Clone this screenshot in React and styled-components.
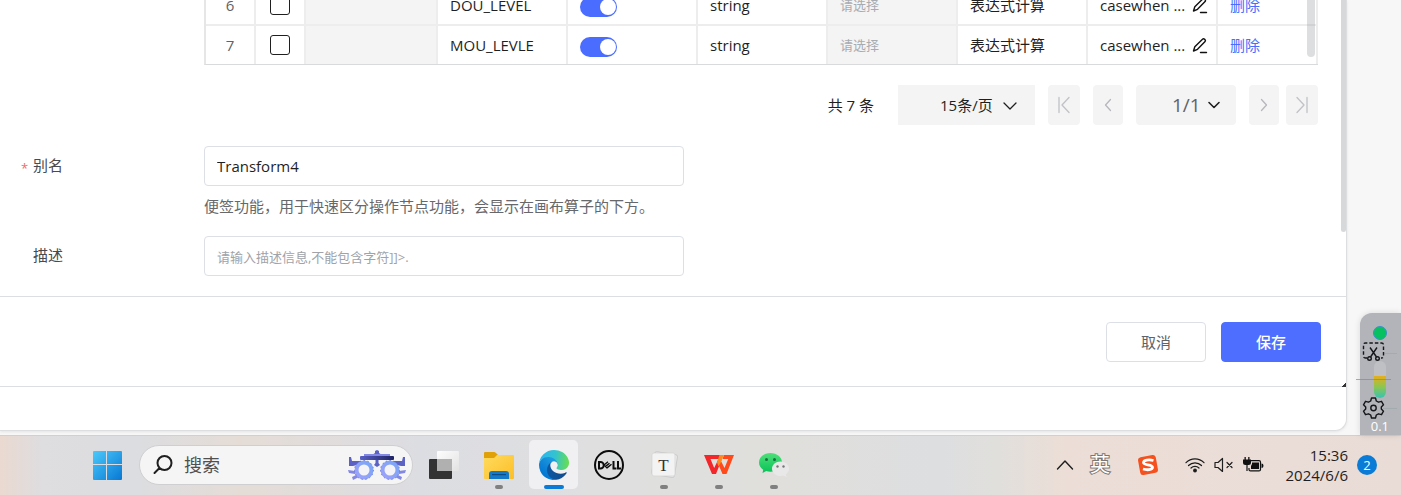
import React from "react";
import styled, { createGlobalStyle } from "styled-components";

const Global = createGlobalStyle`
  *, *::before, *::after { box-sizing: border-box; }
  body {
    margin: 0;
    background: #f7f7f7;
    color: #1f1f1f;
    font: 15px/20px "Open Sans", "Noto Sans CJK SC", sans-serif;
  }
  button, input, select { font: inherit; color: inherit; }
  button { cursor: pointer; }
`;

const Screen = styled.div`
  min-height: 100vh;
  display: flex;
  flex-direction: column;
  overflow: hidden;
`;
const Workspace = styled.div`
  flex: 1;
  display: flex;
  padding-bottom: 4px;
`;
const Panel = styled.main`
  flex: 1;
  min-width: 0;
  background: #fff;
  border-right: 1px solid #dcdee0;
  border-bottom: 1px solid #dcdee0;
  border-bottom-right-radius: 12px;
  box-shadow: 0 1px 3px rgba(0, 0, 0, 0.08);
`;
const Content = styled.div`
  position: relative;
  padding-right: 28px;
  padding-bottom: 20px;
`;
const ScrollThumb = styled.div`
  position: absolute;
  top: 0;
  right: ${(p) => p.$right}px;
  width: ${(p) => p.$width}px;
  height: ${(p) => p.$length}px;
  border-radius: 0 0 4px 4px;
  background: rgba(144, 147, 153, ${(p) => p.$alpha});
`;

const TableFrame = styled.div`
  position: relative;
  margin-left: 204px;
  height: 65px;
  overflow: hidden;
  display: flex;
  flex-direction: column;
  justify-content: flex-end;
  border-left: 2px solid #e6e6e6;
  border-bottom: 1px solid #d9dadc;
`;
const Table = styled.table`
  width: 100%;
  flex: none;
  table-layout: fixed;
  border-spacing: 0;
`;
const Row = styled.tr`
  td { border-bottom: 2px solid #ededed; }
  &:last-child td { border-bottom: 0; }
`;
const Cell = styled.td`
  height: ${(p) => (p.$last ? 38 : 40)}px;
  padding: 0 ${(p) => (p.$center ? 0 : 12)}px;
  border-right: 2px solid #ededed;
  text-align: ${(p) => (p.$center ? "center" : "left")};
  background: ${(p) => (p.$muted ? "#f4f4f4" : "#fff")};
  color: ${(p) => (p.$soft ? "#606266" : "inherit")};
  white-space: nowrap;
`;
const Tick = styled.input`
  appearance: none;
  display: block;
  width: 20px;
  height: 20px;
  margin: 0 auto;
  border: 1px solid #1f1f1f;
  border-radius: 3px;
  background: #fff;
`;
const Switch = styled.input`
  appearance: none;
  display: flex;
  justify-content: flex-end;
  align-items: center;
  width: 37px;
  height: 20px;
  margin: 4px 0 0;
  padding: 0 1px;
  border-radius: 10px;
  background: #4a6cff;
  &::before {
    content: "";
    width: 16px;
    height: 16px;
    border-radius: 50%;
    background: #fff;
  }
`;
const CellSelect = styled.select`
  appearance: none;
  display: block;
  width: 100%;
  padding: 0;
  border: 0;
  background: transparent;
  color: #a8abb2;
  font-size: 13px;
  opacity: 1;
`;
const Expression = styled.div`
  display: flex;
  align-items: center;
  justify-content: space-between;
  margin-right: -4px;
`;
const IconButton = styled.button`
  display: flex;
  padding: 0;
  border: 0;
  background: none;
`;
const TextButton = styled.button`
  padding: 0;
  border: 0;
  background: none;
  color: #4a6cff;
`;

const Pagination = styled.nav`
  display: flex;
  align-items: center;
  justify-content: flex-end;
  gap: 13px;
  padding: 20px 0 21px;
`;
const Total = styled.span`
  margin-right: 11px;
`;
const PagePair = styled.div`
  display: flex;
  gap: 7px;
`;
const PageButton = styled.button`
  display: flex;
  align-items: center;
  justify-content: center;
  width: ${(p) => p.$width}px;
  height: 40px;
  padding: 0;
  border: 0;
  border-radius: 4px;
  background: #f4f4f4;
`;
const SelectBox = styled.label`
  position: relative;
  display: block;
  width: ${(p) => p.$width}px;
  svg {
    position: absolute;
    top: 13px;
    right: ${(p) => p.$arrow}px;
    pointer-events: none;
  }
`;
const PageSelect = styled.select`
  appearance: none;
  display: block;
  width: 100%;
  height: 40px;
  padding: 0 0 0 ${(p) => p.$indent}px;
  border: 0;
  border-radius: ${(p) => p.$radius}px;
  background: #f4f4f4;
  font-size: ${(p) => p.$size}px;
  color: ${(p) => p.$color};
`;

const Form = styled.form`
  display: grid;
  grid-template-columns: 204px minmax(0, 480px);
  row-gap: 10px;
`;
const Label = styled.label`
  display: flex;
  padding-left: 21px;
  line-height: 38px;
  color: #484a4d;
`;
const Star = styled.span`
  width: 12px;
  color: #f56c6c;
  font-size: 13px;
  line-height: 44px;
`;
const TextInput = styled.input`
  display: block;
  width: 100%;
  height: 40px;
  padding: 0 12px;
  border: 1px solid #dcdfe6;
  border-radius: 4px;
  background: #fff;
  outline: 0;
  &::placeholder { color: #a0a3a9; font-size: 13px; opacity: 1; }
`;
const Help = styled.div`
  line-height: 40px;
  color: #66686b;
  white-space: nowrap;
`;

const Footer = styled.footer`
  display: flex;
  justify-content: flex-end;
  gap: 15px;
  padding: 25px 25px 24px;
  border-top: 1px solid #dcdee2;
  border-bottom: 1px solid #dcdee2;
`;
const Action = styled.button`
  width: 100px;
  height: 40px;
  padding: 0;
  border: 1px solid ${(p) => (p.$primary ? "#4d6eff" : "#dcdfe6")};
  border-radius: 4px;
  background: ${(p) => (p.$primary ? "#4d6eff" : "#fff")};
  color: ${(p) => (p.$primary ? "#fff" : "#606266")};
  font-weight: ${(p) => (p.$primary ? 500 : 400)};
`;
const ResizeCorner = styled.div`
  width: 4px;
  height: 4px;
  margin: -4px 0 0 auto;
  background: linear-gradient(135deg, transparent 50%, #333 50%);
`;

const Gutter = styled.aside`
  width: 54px;
  margin-bottom: -4px;
  display: flex;
  flex-direction: column;
  align-items: flex-end;
  justify-content: flex-end;
`;
const Monitor = styled.div`
  position: relative;
  width: 41px;
  height: 122px;
  border-radius: 12px 0 0 0;
  background: #b3b4b9;
  box-shadow: 0 0 6px rgba(0, 0, 0, 0.12);
  svg { position: absolute; bottom: 0; right: 0; }
`;
const Reading = styled.span`
  position: absolute;
  right: 12px;
  bottom: 0;
  font-size: 13px;
  font-weight: 500;
  line-height: 18px;
  color: #fff;
`;

const Taskbar = styled.div`
  display: flex;
  align-items: center;
  justify-content: space-between;
  height: 60px;
  padding: 0 24px 2px 92px;
  border-top: 1px solid #d0d0d1;
  background: linear-gradient(90deg, #ead9d0 0%, #dedde0 3%, #dcdde0 10%, #e5dcd6 17%, #dcdde2 30%, #dfdfe0 42%, #e0dfdc 56%, #dddee0 67%, #e0dfdc 71%, #ecded7 76%, #e9dbd6 100%);
`;
const Dock = styled.div`
  display: flex;
  align-items: center;
`;
const StartButton = styled(IconButton)`
  margin-right: 17px;
`;
const Search = styled.label`
  display: flex;
  align-items: center;
  width: 274px;
  height: 40px;
  margin-right: 3px;
  padding: 0 5px 0 12px;
  border: 1px solid #cfcfd2;
  border-radius: 20px;
  background: #f6f5f5;
`;
const SearchInput = styled.input`
  flex: 1;
  min-width: 0;
  margin-left: 10px;
  padding: 0;
  border: 0;
  outline: 0;
  background: none;
  font-size: 18px;
  &::placeholder { color: #505050; opacity: 1; }
`;
const AppButton = styled.button`
  position: relative;
  display: flex;
  align-items: center;
  justify-content: center;
  width: 49px;
  height: 49px;
  margin: 0 3px;
  padding: 0;
  border: 0;
  border-radius: 5px;
  background: ${(p) => (p.$active ? "#f0f0f3" : "transparent")};
  &::after {
    content: "";
    position: absolute;
    bottom: 0;
    left: 50%;
    transform: translateX(-50%);
    width: ${(p) => (p.$active ? 20 : 8)}px;
    height: 4px;
    border-radius: 2px;
    background: ${(p) => (p.$active ? "#0a7bd6" : "#808080")};
    display: ${(p) => (p.$active || p.$running ? "block" : "none")};
  }
`;
const Tray = styled.div`
  display: flex;
  align-items: center;
`;
const TrayIcons = styled.div`
  display: flex;
  align-items: center;
  gap: 9px;
  margin-right: 21px;
`;
const Ime = styled.span`
  margin: 0 28px 0 16px;
  font-size: 20px;
  color: #fff;
  -webkit-text-stroke: 2px #7a7674;
  paint-order: stroke fill;
`;
const SogouSlot = styled.span`
  display: flex;
  margin-right: 27px;
`;
const Clock = styled.time`
  width: 63px;
  margin-right: 9px;
  font-size: 15px;
  white-space: nowrap;
  display: flex;
  flex-direction: column;
  align-items: flex-end;
`;
const Badge = styled.span`
  width: 20px;
  height: 20px;
  border-radius: 50%;
  background: #0a7bd6;
  color: #fff;
  font-size: 13px;
  text-align: center;
`;

const Line = ({ w, h, d, color = "#1f1f1f", sw = 1.3 }) => (
  <svg width={w} height={h} viewBox={`0 0 ${w} ${h}`} fill="none" stroke={color} strokeWidth={sw} strokeLinecap="round" strokeLinejoin="round">
    <path d={d} />
  </svg>
);

const WindowsLogo = () => (
  <svg width="30" height="30" viewBox="0 0 30 30">
    <defs>
      <linearGradient id="win" x1="0" y1="0" x2="1" y2="1">
        <stop offset="0" stopColor="#4cc9fb" />
        <stop offset="1" stopColor="#0778d4" />
      </linearGradient>
    </defs>
    <path fill="url(#win)" d="M2 1H14V14H1V2Q1 1 2 1ZM15 1H29Q30 1 30 2V14H15ZM1 15H14V30H2Q1 30 1 29ZM15 15H30V29Q30 30 29 30H15Z" />
  </svg>
);

const Phoropter = () => (
  <svg width="60" height="34" viewBox="0 0 60 34">
    <defs>
      <linearGradient id="bar" x1="0" x2="1">
        <stop offset="0" stopColor="#5960c4" />
        <stop offset="1" stopColor="#1e2363" />
      </linearGradient>
      <linearGradient id="ring" x1="0" y1="1" x2="1" y2="0">
        <stop offset="0" stopColor="#9da2fa" />
        <stop offset="1" stopColor="#7aa5f5" />
      </linearGradient>
    </defs>
    <path fill="#5b62c4" d="M28 5V3l2-1 2 1v2l3 2H25zM2 9h2l1 4h9v3L6 18H2zM58 9h-2l-1 4h-9v3l8 2h4zM28.500 12h3v3l1.500 2-3 2-3-2 1.500-2z" />
    <path fill="#8388e2" d="M1 22l7 1v3l-6-1zM59 22l-7 1v3l6-1zM5 29l6-3 1 3-6 3zM55 29l-6-3-1 3 6 3zM17 6h26v2H17z" />
    <rect x="13" y="8" width="34" height="4" rx="1" fill="url(#bar)" />
    <circle cx="17" cy="22" r="7.500" fill="#f4f4f8" stroke="url(#ring)" strokeWidth="4" />
    <circle cx="43" cy="22" r="7.500" fill="#f4f4f8" stroke="url(#ring)" strokeWidth="4" />
    <circle cx="17" cy="22" r="9.500" fill="none" stroke="#5a6cd6" strokeWidth=".8" strokeDasharray="1.500 2.500" />
    <circle cx="43" cy="22" r="9.500" fill="none" stroke="#5a6cd6" strokeWidth=".8" strokeDasharray="1.500 2.500" />
  </svg>
);

const TaskView = () => (
  <svg width="30" height="30" viewBox="0 0 30 30">
    <defs>
      <linearGradient id="pane" x1="0" y1="0" x2="1" y2="1">
        <stop offset="0" stopColor="#fdfdfd" />
        <stop offset="1" stopColor="#e2e2e3" />
      </linearGradient>
    </defs>
    <rect x="0" y="9" width="23" height="20" rx="1" fill="#333" />
    <rect x="8" y="1" width="22" height="20" rx="1" fill="url(#pane)" />
    <rect x="8" y="9" width="15" height="12" fill="#b0b0b0" />
  </svg>
);

const Folder = () => (
  <svg width="30" height="30" viewBox="0 0 30 30">
    <defs>
      <linearGradient id="fold" x1="0" y1="0" x2="1" y2="1">
        <stop offset="0" stopColor="#ffdb5e" />
        <stop offset="1" stopColor="#fcbe27" />
      </linearGradient>
    </defs>
    <path fill="#dfa008" d="M0 3q0-1 1-1h9q1 0 2 1l2 2v5H0z" />
    <path fill="url(#fold)" d="M0 8h10l3-3h16q1 0 1 1v22q0 1-1 1H1q-1 0-1-1z" />
    <path fill="#1579ca" d="M5 29v-5q0-3 3-3h14q3 0 3 3v5z" />
    <rect x="8" y="24" width="14" height="1.200" fill="#0b4b86" />
  </svg>
);

const Edge = () => (
  <svg width="30" height="30" viewBox="0 0 256 256">
    <defs>
      <linearGradient id="e1" x1="60" y1="177" x2="240" y2="177" gradientUnits="userSpaceOnUse">
        <stop offset="0" stopColor="#0c59a4" />
        <stop offset="1" stopColor="#114a8b" />
      </linearGradient>
      <linearGradient id="e2" x1="152" y1="100" x2="45" y2="220" gradientUnits="userSpaceOnUse">
        <stop offset="0" stopColor="#1b9de2" />
        <stop offset=".5" stopColor="#1387d6" />
        <stop offset="1" stopColor="#0078d4" />
      </linearGradient>
      <linearGradient id="e3" x1="20" y1="70" x2="250" y2="100" gradientUnits="userSpaceOnUse">
        <stop offset="0" stopColor="#2fb5ea" />
        <stop offset=".5" stopColor="#33c3cf" />
        <stop offset="1" stopColor="#66dd55" />
      </linearGradient>
    </defs>
    <path fill="url(#e1)" d="M231 190.500a93.700 93.700 0 0 1-10.500 4.700 101.900 101.900 0 0 1-35.900 6.500c-47.300 0-88.500-32.500-88.500-74.300a31.500 31.500 0 0 1 16.400-27.300c-42.800 1.800-53.800 46.400-53.800 72.500 0 73.900 68.100 81.400 82.800 81.400 7.900 0 19.800-2.300 27-4.600l1.300-.4a128.300 128.300 0 0 0 66.600-52.800 4 4 0 0 0-5.400-5.700z" />
    <path fill="url(#e2)" d="M105.700 241.400a79.200 79.200 0 0 1-22.700-21.300 80.700 80.700 0 0 1 29.500-120c3.200-1.500 8.500-4.100 15.600-4a32.400 32.400 0 0 1 25.700 13 31.900 31.900 0 0 1 6.300 18.700c0-.2 24.500-79.600-80-79.600-43.900 0-80 41.600-80 78.200a130.200 130.200 0 0 0 12.100 56 128 128 0 0 0 156.400 67.100 75.500 75.500 0 0 1-62.800-8z" />
    <path fill="url(#e3)" d="M152.300 148.900c-.9 1-3.400 2.500-3.400 5.600 0 2.600 1.700 5.200 4.800 7.300 14.400 10.100 41.700 8.700 41.800 8.700a59.500 59.500 0 0 0 30.200-8.300 61.400 61.400 0 0 0 30.400-52.900c.3-22.400-8-37.300-11.300-43.900C223.500 23.900 177.700 0 128 0A128 128 0 0 0 0 126.200c.5-36.500 36.800-66 80-66 3.500 0 23.500.3 42 10 16.300 8.600 24.900 18.900 30.800 29.200 6.200 10.700 7.300 24.100 7.300 29.500s-2.700 13.300-7.800 20z" />
  </svg>
);

const Dell = () => (
  <svg width="30" height="30" viewBox="0 0 30 30" fill="none" stroke="#0c0c0c" strokeWidth="2">
    <circle cx="15" cy="15" r="14" />
    <path d="M5 12v6.500h1.500a3.200 3.200 0 0 0 0-6.500zM19.500 11v7.500H22.500M24 11v7.500H27" strokeWidth="2" />
    <path d="M10 15l4-3.200M11.500 16.400l4-3.200M13 17.900l4.500-3.600M10 15l3.400 3.200" strokeWidth="1.400" />
  </svg>
);

const Typora = () => (
  <svg width="28" height="28" viewBox="0 0 28 28">
    <rect x="3" y="2" width="23" height="23" rx="2" fill="#ececec" stroke="#c4c4c4" strokeWidth=".8" transform="rotate(9 14 14)" />
    <rect x="2" y="2" width="23" height="23" rx="2" fill="#f3f3f3" stroke="#d2d2d2" strokeWidth=".7" />
    <text x="13.500" y="19.500" textAnchor="middle" fontFamily="Liberation Serif, serif" fontSize="17" fill="#333">T</text>
  </svg>
);

const Wps = () => (
  <svg width="30" height="22" viewBox="0 0 30 22">
    <path fill="#f3262a" d="M0 1h17l-1.800 4H6.500l3.700 9L14 6h3.500L12 20H8z" />
    <path fill="#ff4a1c" d="M20 1h10l-7.500 19H18.500L14 9.500 16 5l4.500 9L24.200 5H18.500z" />
    <path fill="#ff8a1f" d="M15.500 1H20l-3.500 8-2 3.500-1.500-4z" />
  </svg>
);

const WeChat = () => (
  <svg width="30" height="26" viewBox="0 0 30 26">
    <defs>
      <linearGradient id="wc" x1="0" y1="0" x2="0" y2="1">
        <stop offset="0" stopColor="#4fdf78" />
        <stop offset="1" stopColor="#07c258" />
      </linearGradient>
    </defs>
    <path fill="url(#wc)" d="M11.500 1C5 1 0 5.200 0 10.500c0 3 1.600 5.500 4.200 7.300L3.500 21l3.700-1.900c1.300.4 2.800.6 4.300.6C18 19.700 23 15.700 23 10.500S18 1 11.500 1z" />
    <circle cx="7.500" cy="7.500" r="1.500" fill="#14713b" />
    <circle cx="15.500" cy="7.500" r="1.500" fill="#14713b" />
    <path fill="#e8e8e8" d="M21.500 9.500c-4.700 0-8.500 3.200-8.500 7.200s3.800 7.300 8.500 7.300c1.100 0 2.100-.2 3-.5l3 1.500-.7-2.700c2-1.300 3.200-3.300 3.200-5.600 0-4-3.800-7.200-8.500-7.200z" />
    <circle cx="18.500" cy="14.500" r="1.200" fill="#777" />
    <circle cx="24.500" cy="14.500" r="1.200" fill="#777" />
  </svg>
);

const Sogou = () => (
  <svg width="20" height="20" viewBox="0 0 20 20">
    <rect x="1" y="1" width="18" height="18" rx="3" fill="#f4511e" transform="rotate(-10 10 10)" />
    <path d="M15.500 5.500C11 4.300 5.500 5 5.500 7.500c0 3.200 9 1.300 9 4.800 0 2.700-5.500 3-9.500 1.700" fill="none" stroke="#fff" strokeWidth="2.800" />
  </svg>
);

const Wifi = () => (
  <svg width="20" height="16" viewBox="0 0 20 16" fill="none" stroke="#1b1b1b" strokeWidth="1.200" strokeLinecap="round">
    <path d="M1 5.700a12.700 12.700 0 0 1 18 0M3.500 8.500a9.200 9.200 0 0 1 13 0M6 11a5.700 5.700 0 0 1 8 0" />
    <circle cx="10" cy="13.500" r="1.300" fill="#1b1b1b" />
  </svg>
);

const Muted = () => <Line w={20} h={16} sw={1.2} d="M1 5.500h3L8.500 1.500v13L4 10.500H1zM13 5.500l5 5M18 5.500l-5 5" />;

const Battery = () => (
  <svg width="21" height="16" viewBox="0 0 21 16">
    <path d="M8 3.600h8q1.500 0 1.500 1.500v7.300q0 1.500-1.500 1.500H7.500q-1.500 0-1.500-1.500V11" fill="none" stroke="#111" strokeWidth="1.200" />
    <path d="M9 5.500h7V12H8V9l1-2zM18.500 6.500q2 0 2 2.300t-2 2.300zM0 2.500h8v3Q8 8 5.500 8H2.500Q0 8 0 5.500zM1.500 0h1.300v3H1.500zM5.200 0h1.300v3H5.200zM3.400 8h1.200v6H3.400z" fill="#111" />
  </svg>
);

const EditIcon = () => (
  <svg width="16" height="17" viewBox="0 0 16 17" fill="none" stroke="#111" strokeWidth="1.400" strokeLinejoin="round" strokeLinecap="round">
    <path d="M1.500 14l1.300-4.300L10.500 2.200c1.300-1.200 3.800.8 2.600 2.400L5.500 12.300zM8.500 15.500h6" />
  </svg>
);

const MonitorArt = () => (
  <svg width="46" height="122" viewBox="0 0 46 122" fill="none">
    <defs>
      <linearGradient id="level" x1="0" y1="0" x2="0" y2="1">
        <stop offset="0" stopColor="#e6ae1c" />
        <stop offset=".5" stopColor="#8cc653" />
        <stop offset="1" stopColor="#35c3b4" />
      </linearGradient>
    </defs>
    <path d="M28 40.500h14M28 95.500h14" stroke="#a4abae" />
    <circle cx="25" cy="20" r="6.500" fill="#07c160" stroke="#3b8fc9" />
    <rect x="19" y="48" width="12" height="37" rx="6" fill="#bfc0c4" />
    <path d="M19 63h12v16a6 6 0 0 1-12 0z" fill="url(#level)" />
    <path d="M1 66.500h35" stroke="#85878c" strokeOpacity=".7" />
    <g stroke="#15171a" strokeWidth="1.400">
      <path d="M12 45h-1.500q-2 0-2-2V32q0-2 2-2h16q2 0 2 2v11q0 2-2 2H26" strokeDasharray="3.500 2" />
      <path d="M15 34.500l6.500 9.500M22 34.500L15.500 44" />
      <circle cx="14.500" cy="45.500" r="1.800" />
      <circle cx="22.500" cy="45.500" r="1.800" />
    </g>
    <g transform="translate(6.500 83)" stroke="#15171a" strokeWidth="1.400" strokeLinejoin="round">
      <path d="M10 2h4l.8 3 2.200 1.200 3-.9 2 3.500-2.200 2.100v2.200l2.200 2.100-2 3.500-3-.9-2.200 1.200-.8 3h-4l-.8-3L7 17.800l-3 .9-2-3.500 2.200-2.100v-2.200L2 8.800l2-3.500 3 .9L9.200 5z" />
      <circle cx="12" cy="12" r="2.700" />
    </g>
  </svg>
);

const rows = [
  { n: 6, name: "DOU_LEVEL" },
  { n: 7, name: "MOU_LEVLE" },
];
const columns = [50, 50, 132, 130, 130, 130, 130, 130, 130];

export default function App() {
  return (
    <Screen>
      <Global />
      <Workspace>
        <Panel>
          <Content>
            <ScrollThumb $right={0} $width={5} $length={232} $alpha={0.36} />
            <TableFrame>
              <Table>
                <colgroup>
                  {columns.map((w, i) => <col key={i} width={w} />)}
                  <col />
                </colgroup>
                <tbody>
                  {rows.map((r, i) => {
                    const last = i === rows.length - 1;
                    return (
                      <Row key={r.n}>
                        <Cell $last={last} $center $soft>{r.n}</Cell>
                        <Cell $last={last} $center><Tick type="checkbox" aria-label={`选择 ${r.name}`} /></Cell>
                        <Cell $last={last} $muted />
                        <Cell $last={last}>{r.name}</Cell>
                        <Cell $last={last}><Switch type="checkbox" defaultChecked aria-label={`启用 ${r.name}`} /></Cell>
                        <Cell $last={last}>string</Cell>
                        <Cell $last={last} $muted>
                          <CellSelect disabled aria-label={`格式 ${r.name}`}><option>请选择</option></CellSelect>
                        </Cell>
                        <Cell $last={last}>表达式计算</Cell>
                        <Cell $last={last}>
                          <Expression>
                            casewhen ...
                            <IconButton type="button" aria-label="编辑"><EditIcon /></IconButton>
                          </Expression>
                        </Cell>
                        <Cell $last={last}><TextButton type="button">删除</TextButton></Cell>
                      </Row>
                    );
                  })}
                </tbody>
              </Table>
              <ScrollThumb $right={3} $width={8} $length={57} $alpha={0.3} />
            </TableFrame>
            <Pagination aria-label="分页">
              <Total>共 7 条</Total>
              <SelectBox $width={137} $arrow={18}>
                <PageSelect $indent={42} $radius={0} $size={15} $color="#1f1f1f" aria-label="每页条数"><option>15条/页</option></PageSelect>
                <Line w={14} h={14} d="M1 5l6 6 6-6" />
              </SelectBox>
              <PageButton $width={32} type="button" aria-label="首页"><Line w={14} h={18} color="#c0c2c6" d="M2 1.500v15M12 1.500L5 9l7 7.500" /></PageButton>
              <PageButton $width={30} type="button" aria-label="上一页"><Line w={14} h={14} color="#b5b7bb" d="M9.500 1.500L4.500 7l5 5.500" /></PageButton>
              <SelectBox $width={100} $arrow={15}>
                <PageSelect $indent={36} $radius={4} $size={19} $color="#606266" aria-label="页码"><option>1/1</option></PageSelect>
                <Line w={14} h={14} sw={1.6} d="M2 4.500l5 5 5-5" />
              </SelectBox>
              <PagePair>
                <PageButton $width={30} type="button" aria-label="下一页"><Line w={14} h={14} color="#b5b7bb" d="M4.500 1.500L9.500 7l-5 5.500" /></PageButton>
                <PageButton $width={32} type="button" aria-label="末页"><Line w={14} h={18} color="#c0c2c6" d="M12 1.500v15M2 1.500L9 9l-7 7.500" /></PageButton>
              </PagePair>
            </Pagination>
            <Form id="node" onSubmit={(e) => e.preventDefault()}>
              <Label htmlFor="alias"><Star>*</Star>别名</Label>
              <div>
                <TextInput id="alias" defaultValue="Transform4" />
                <Help>便签功能，用于快速区分操作节点功能，会显示在画布算子的下方。</Help>
              </div>
              <Label htmlFor="desc"><Star />描述</Label>
              <TextInput id="desc" placeholder="请输入描述信息,不能包含字符]]>." />
            </Form>
          </Content>
          <Footer>
            <Action type="button">取消</Action>
            <Action type="submit" form="node" $primary>保存</Action>
          </Footer>
          <ResizeCorner />
        </Panel>
        <Gutter>
          <Monitor>
            <MonitorArt />
            <Reading>0.1</Reading>
          </Monitor>
        </Gutter>
      </Workspace>
      <Taskbar>
        <Dock>
          <StartButton type="button" aria-label="开始"><WindowsLogo /></StartButton>
          <Search>
            <Line w={22} h={22} sw={2} d="M19.500 9A7 7 0 1 1 5.500 9a7 7 0 0 1 14 0zM7.500 14L2.500 19" />
            <SearchInput placeholder="搜索" aria-label="搜索" />
            <Phoropter />
          </Search>
          <AppButton aria-label="任务视图"><TaskView /></AppButton>
          <AppButton $running aria-label="文件资源管理器"><Folder /></AppButton>
          <AppButton $active aria-label="Edge"><Edge /></AppButton>
          <AppButton aria-label="Dell"><Dell /></AppButton>
          <AppButton $running aria-label="Typora"><Typora /></AppButton>
          <AppButton $running aria-label="WPS"><Wps /></AppButton>
          <AppButton $running aria-label="微信"><WeChat /></AppButton>
        </Dock>
        <Tray>
          <Line w={18} h={12} sw={1.4} d="M1.500 10L9 2l7.500 8" />
          <Ime>英</Ime>
          <SogouSlot><Sogou /></SogouSlot>
          <TrayIcons><Wifi /><Muted /><Battery /></TrayIcons>
          <Clock><span>15:36</span><span>2024/6/6</span></Clock>
          <Badge>2</Badge>
        </Tray>
      </Taskbar>
    </Screen>
  );
}
